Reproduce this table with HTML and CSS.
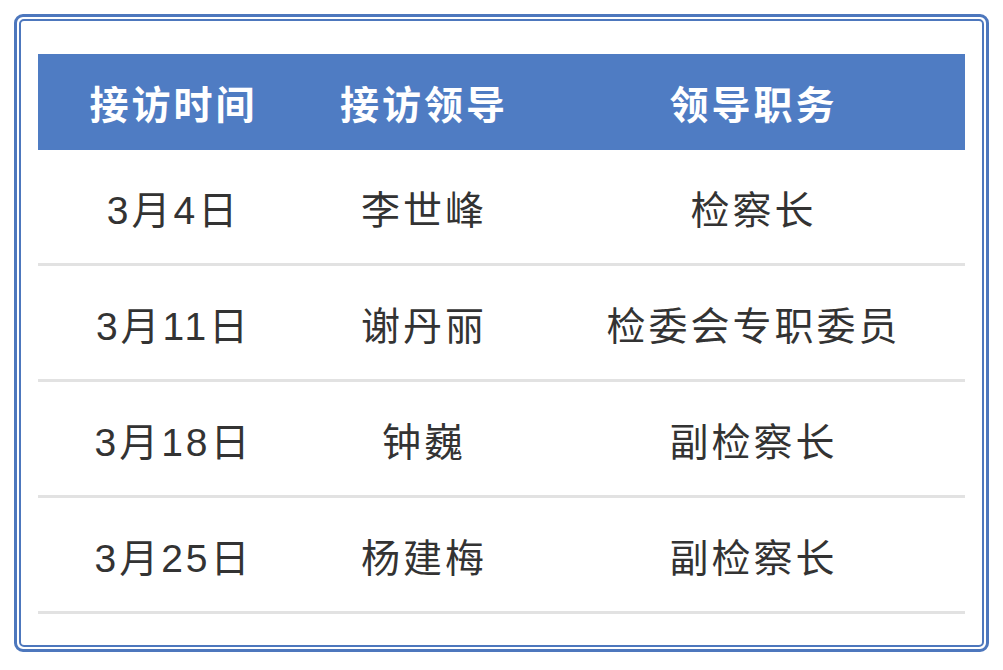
FILE: index.html
```html
<!DOCTYPE html>
<html lang="zh">
<head>
<meta charset="utf-8">
<title>接访安排</title>
<link rel="stylesheet" href="styles.css">
</head>
<body>
<div class="frame">
  <div class="inner">
    <table class="schedule">
      <thead>
        <tr>
          <th class="c1">接访时间</th>
          <th class="c2">接访领导</th>
          <th class="c3">领导职务</th>
        </tr>
      </thead>
      <tbody>
        <tr><td>3月4日</td><td>李世峰</td><td>检察长</td></tr>
        <tr><td>3月11日</td><td>谢丹丽</td><td>检委会专职委员</td></tr>
        <tr><td>3月18日</td><td>钟巍</td><td>副检察长</td></tr>
        <tr><td>3月25日</td><td>杨建梅</td><td>副检察长</td></tr>
      </tbody>
    </table>
  </div>
</div>
</body>
</html>
```
FILE: styles.css
```css
html, body {
  margin: 0;
  padding: 0;
  background: #ffffff;
}
body {
  font-family: "Liberation Sans", "Noto Sans CJK SC", sans-serif;
}
.frame {
  margin: 14px 0 0 14px;
  width: 975px;
  height: 638px;
  box-sizing: border-box;
  border: 3px solid #4d77bd;
  border-radius: 9px;
  padding: 2px;
}
.inner {
  height: 100%;
  box-sizing: border-box;
  border: 2px solid #4d77bd;
  border-radius: 5px;
  padding: 33px 16px 0 17px;
}
.schedule {
  width: 927px;
  border-collapse: collapse;
  table-layout: fixed;
}
.schedule th {
  background: #4f7cc3;
  color: #ffffff;
  font-family: "Noto Sans CJK SC", sans-serif;
  font-weight: 700;
  font-size: 39px;
  letter-spacing: 3px;
  height: 96px;
  padding: 0 0 0 3px;
  text-align: center;
  vertical-align: middle;
}
.schedule .c1 { width: 265px; }
.schedule .c2 { width: 230px; }
.schedule .c3 { width: 423px; }
.schedule td {
  color: #333333;
  font-size: 39px;
  letter-spacing: 3px;
  height: 113px;
  padding: 0 0 0 3px;
  text-align: center;
  vertical-align: middle;
  border-bottom: 3px solid #e2e2e2;
}
```
